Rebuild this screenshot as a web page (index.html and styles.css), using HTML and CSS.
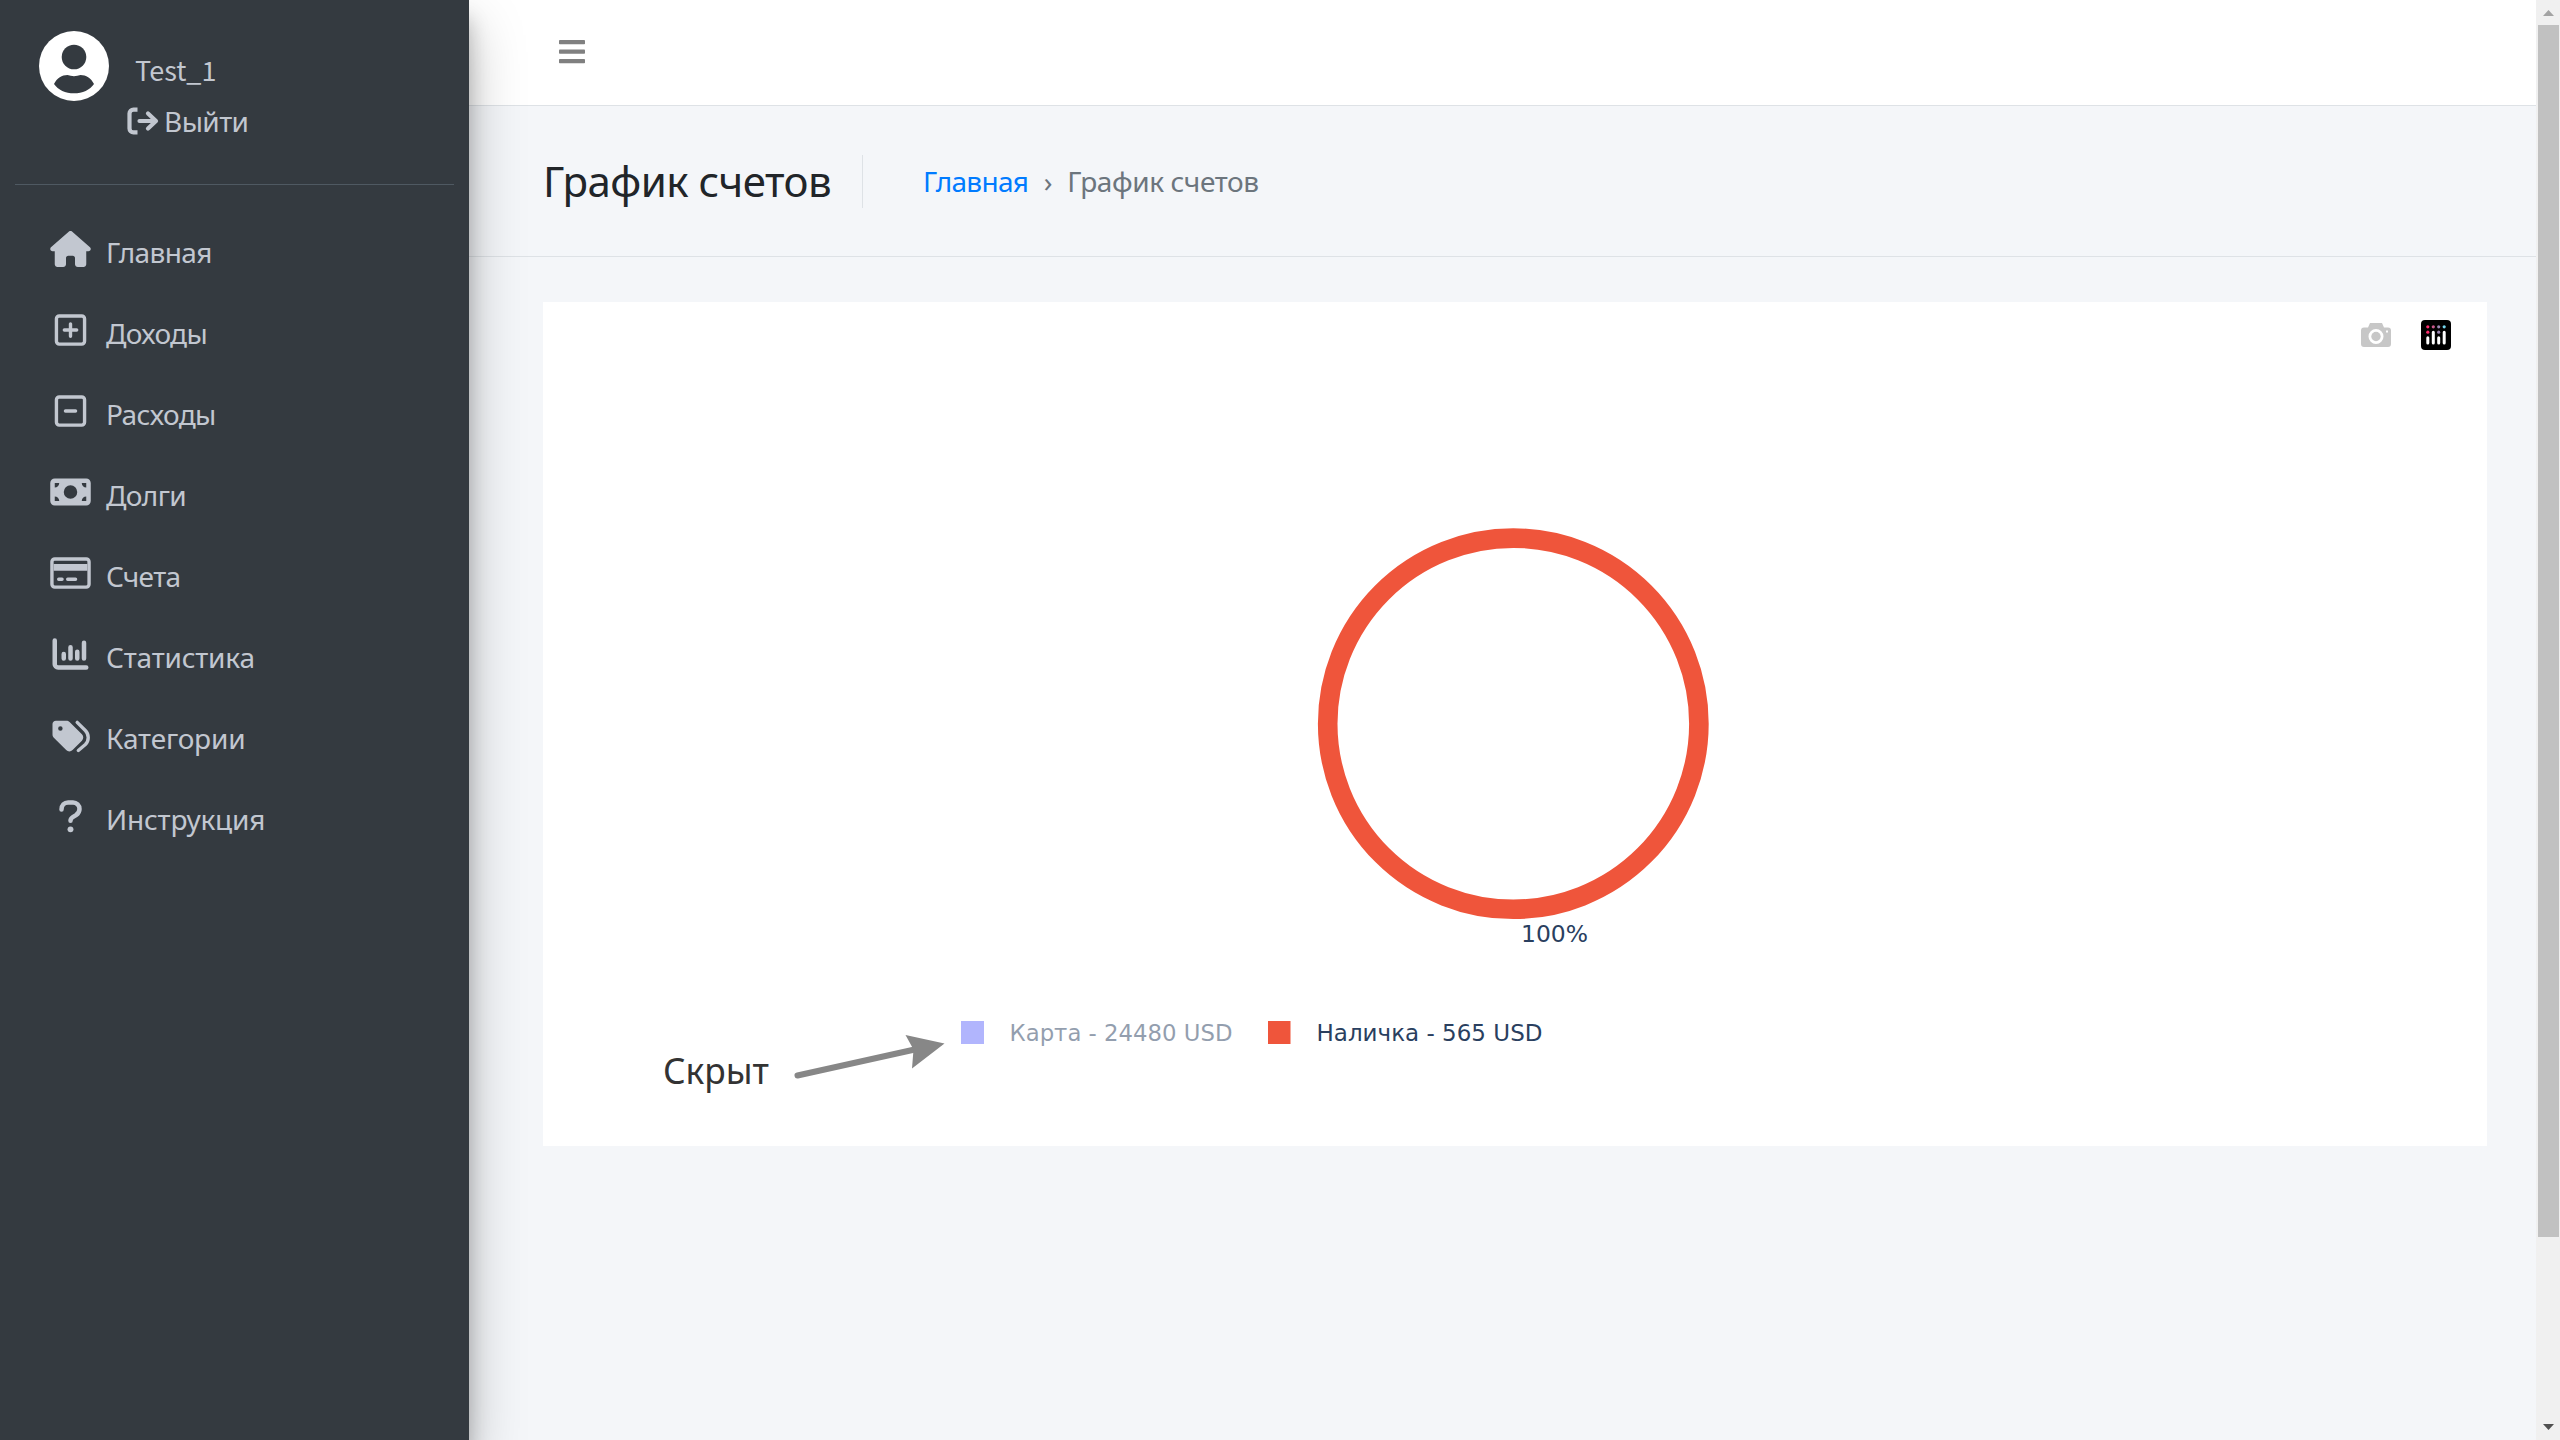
FILE: index.html
```html
<!DOCTYPE html>
<html lang="ru">
<head>
<meta charset="utf-8">
<title>График счетов</title>
<link rel="stylesheet" href="styles.css">
</head>
<body>
<div class="app">
  <aside class="sidebar">
    <div class="user">
      <svg class="avatar" viewBox="0 0 70 70"><circle cx="35" cy="35" r="35" fill="#fff"/><circle cx="35" cy="26" r="12.3" fill="#343a40"/><path d="M15 53C18 47 23 44 28.500 44C32.500 45.500 37.500 45.500 41.500 44C47 44 52 47 55 53C51 59 43.500 62.300 35 62.300S19 59 15 53z" fill="#343a40"/></svg>
      <div class="user-text">
        <span class="user-name">Test_1</span>
        <a class="logout"><svg class="logout-icon" viewBox="0 0 32 28" fill="none" stroke="currentColor" stroke-width="4.200" stroke-linecap="round" stroke-linejoin="round"><path d="M10.500 2.600H6.500a4 4 0 0 0-4 4v14.800a4 4 0 0 0 4 4h4" stroke-linecap="butt"/><path d="M12.500 14h16M21 6.500l8 7.500-8 7.500"/></svg><span>Выйти</span></a>
      </div>
    </div>
    <nav class="nav">
      <a class="nav-item"><svg class="nav-icon" viewBox="0 0 576 512"><path fill="currentColor" d="M575.800 255.500c0 18-15 32.100-32 32.100h-32l.7 160.200c0 2.700-.2 5.400-.5 8.100V472c0 22.100-17.900 40-40 40H456c-1.100 0-2.200 0-3.300-.1c-1.400.1-2.800.1-4.200.1H416 392c-22.100 0-40-17.900-40-40V448 384c0-17.700-14.300-32-32-32H256c-17.700 0-32 14.300-32 32v64 24c0 22.100-17.900 40-40 40H160 128.100c-1.500 0-3-.1-4.500-.2c-1.200.1-2.400.2-3.600.2H104c-22.100 0-40-17.900-40-40V360c0-.9 0-1.900.1-2.800V287.600H32c-18 0-32-14-32-32.100c0-9 3-17 10-24L266.400 8c7-7 15-8 22-8s15 2 21 7L564.800 231.500c8 7 12 15 11 24z"/></svg><span>Главная</span></a>
      <a class="nav-item"><svg class="nav-icon" viewBox="0 0 576 512" fill="none" stroke="currentColor" stroke-width="48" stroke-linecap="round"><rect x="88" y="56" width="400" height="400" rx="40"/><path d="M288 168v176M200 256h176"/></svg><span>Доходы</span></a>
      <a class="nav-item"><svg class="nav-icon" viewBox="0 0 576 512" fill="none" stroke="currentColor" stroke-width="48" stroke-linecap="round"><rect x="88" y="56" width="400" height="400" rx="40"/><path d="M216 256h144"/></svg><span>Расходы</span></a>
      <a class="nav-item"><svg class="nav-icon" viewBox="0 0 576 512"><path fill="currentColor" fill-rule="evenodd" d="M64 64C28.700 64 0 92.700 0 128V384c0 35.300 28.700 64 64 64H512c35.300 0 64-28.700 64-64V128c0-35.300-28.700-64-64-64zM64 384V320c35.300 0 64 28.700 64 64zM64 192V128h64c0 35.300-28.700 64-64 64zM448 384c0-35.300 28.700-64 64-64v64zM512 192c-35.300 0-64-28.700-64-64h64zM288 160a96 96 0 1 1 0 192 96 96 0 1 1 0-192z"/></svg><span>Долги</span></a>
      <a class="nav-item"><svg class="nav-icon" viewBox="0 0 576 512" fill="none" stroke="currentColor" stroke-width="48" stroke-linecap="round"><rect x="24" y="56" width="528" height="400" rx="40"/><path d="M48 176h480" stroke-width="96" stroke-linecap="butt"/><path d="M120 344h48M248 344h112"/></svg><span>Счета</span></a>
      <a class="nav-item long"><svg class="nav-icon" viewBox="0 0 576 512" fill="none" stroke="currentColor" stroke-width="64" stroke-linecap="round" stroke-linejoin="round"><path d="M64 64v336a48 48 0 0 0 48 48h400M192 256v64M288 160v160M384 224v96M480 96v224"/></svg><span>Статистика</span></a>
      <a class="nav-item long"><svg class="nav-icon" viewBox="0 0 576 512"><g transform="translate(0 20)"><path fill="currentColor" fill-rule="evenodd" d="M32 80v149.500c0 17 6.700 33.300 18.700 45.300l176 176c25 25 65.500 25 90.500 0L450.700 317.300c25-25 25-65.500 0-90.500l-176-176C262.700 38.700 246.500 32 229.500 32H80C53.500 32 32 53.500 32 80zM144 112a32 32 0 1 1 0 64 32 32 0 1 1 0-64z"/><path d="M383 56L499 172a142 142 0 0 1 0 200L399 456" fill="none" stroke="currentColor" stroke-width="48" stroke-linecap="round"/></g></svg><span>Категории</span></a>
      <a class="nav-item long"><svg class="nav-icon" viewBox="0 0 576 512"><path d="M160 165C160 101 200 64 254 64h70a92 92 0 0 1 92 92c0 42-18 66-50 88l-46 28c-22 14-32 26-32 52" fill="none" stroke="currentColor" stroke-width="64" stroke-linecap="round"/><circle cx="288" cy="446" r="42" fill="currentColor"/></svg><span>Инструкция</span></a>
    </nav>
  </aside>
  <main class="main">
    <header class="topbar"><svg class="burger" viewBox="0 0 26 24" fill="#808080"><rect width="26" height="4.300" rx=".8"/><rect y="9.500" width="26" height="4.300" rx=".8"/><rect y="19" width="26" height="4.300" rx=".8"/></svg></header>
    <section class="heading">
      <h1 class="title">График счетов</h1>
      <div class="crumbs"><a class="crumb-link">Главная</a><span class="crumb-sep">›</span><span class="crumb-here">График счетов</span></div>
    </section>
    <section class="card">
      <svg class="chart" viewBox="0 0 1944 844">
        <g transform="translate(1818 21)"><path fill="#c7c7c7" fill-rule="evenodd" d="M3 4.500H7L9 0h12l2 4.500h4a3 3 0 0 1 3 3V21a3 3 0 0 1-3 3H3a3 3 0 0 1-3-3V7.500a3 3 0 0 1 3-3zM15 6a7.500 7.500 0 1 0 0 15 7.500 7.500 0 0 0 0-15zM25 7.500v2h2v-2z"/><circle cx="15" cy="13.500" r="4.700" fill="#c7c7c7"/></g>
        <g transform="translate(1878 18)"><rect width="30" height="30" rx="4"/><g stroke="#fff" stroke-width="3" stroke-linecap="round"><path d="M6.800 17.700v5.300M12.300 12.200v10.800M17.700 17.700v5.300M23.200 12.200v10.800"/></g><g fill="#ff2c6d"><circle cx="6.800" cy="6.800" r="1.600"/><circle cx="6.800" cy="12.200" r="1.600"/></g><circle cx="12.300" cy="6.800" r="1.600" fill="#c8588c"/><circle cx="17.700" cy="6.800" r="1.600" fill="#9b86b2"/><circle cx="17.700" cy="12.200" r="1.600" fill="#9b86b2"/><circle cx="23.200" cy="6.800" r="1.600" fill="#74d6ee"/></g>
        <circle cx="970.300" cy="421.700" r="185.600" fill="none" stroke="#ef553b" stroke-width="19.600"/>
        <text class="label" x="978" y="640" textLength="67" lengthAdjust="spacingAndGlyphs">100%</text>
        <rect x="418" y="719" width="23" height="23" fill="#b1b5fd"/>
        <text class="label muted" x="466.500" y="739" textLength="223" lengthAdjust="spacingAndGlyphs">Карта - 24480 USD</text>
        <rect x="725" y="719" width="22.500" height="23" fill="#ef553b"/>
        <text class="label" x="773.500" y="739" textLength="226" lengthAdjust="spacingAndGlyphs">Наличка - 565 USD</text>
        <text class="note" x="120" y="782" textLength="106" lengthAdjust="spacingAndGlyphs">Скрыт</text>
        <path d="M254.500 773.500L374 747" stroke="#878787" stroke-width="6" stroke-linecap="round"/><path d="M401.500 741.500L362.500 733l8 14.500-1.500 19z" fill="#878787"/>
      </svg>
    </section>
  </main>
  <div class="scrollbar">
    <svg class="arrow" viewBox="0 0 11 6"><path d="M5.500 0L11 6H0z" fill="#a3a3a3"/></svg>
    <div class="thumb"></div>
    <svg class="arrow arrow-down" viewBox="0 0 11 6"><path d="M5.500 6L11 0H0z" fill="#505050"/></svg>
  </div>
</div>
</body>
</html>
```
FILE: styles.css
```css
* { box-sizing: border-box; }
body { margin: 0; font-family: "Noto Sans", sans-serif; font-size: 28px; color: #212529; }
svg { display: block; flex: none; overflow: visible; }
.app { display: flex; width: 2560px; height: 1440px; overflow: hidden; background: #f4f6f9; }

.sidebar { position: relative; z-index: 1; flex: none; width: 469px; padding: 0 15px; background: #343a40; color: #c2c7d0; box-shadow: 0 26px 52px rgba(0,0,0,.25), 0 19px 19px rgba(0,0,0,.22); }
.user { display: flex; height: 185px; padding: 31px 0 0 24px; border-bottom: 1px solid #4f5962; }
.avatar { width: 70px; height: 70px; }
.user-text { display: flex; flex-direction: column; padding: 13px 0 0 18px; }
.user-name { padding-left: 8px; line-height: 51px; font-family: "Noto Sans CJK SC", sans-serif; font-size: 27px; }
.logout { display: flex; align-items: center; gap: 5px; line-height: 51px; letter-spacing: -.02em; }
.logout span { padding-top: 1px; }
.logout-icon { width: 32px; height: 28px; }
.nav { display: flex; flex-direction: column; padding-top: 26px; }
.nav-item { display: flex; align-items: center; gap: 15px; height: 81px; padding-left: 35px; letter-spacing: -.022em; }
.nav-item.long { letter-spacing: -.007em; }
.nav-icon { width: 41px; height: 36px; margin-top: -5px; }

.main { flex: 1; display: flex; flex-direction: column; }
.topbar { height: 106px; padding: 40px 0 0 90px; background: #fff; border-bottom: 1px solid #dee2e6; }
.burger { width: 26px; height: 24px; }
.heading { display: flex; align-items: center; height: 151px; padding-left: 74px; border-bottom: 1px solid #dee2e6; }
.title { width: 320px; height: 53px; margin: 0; border-right: 1px solid #dee2e6; font-size: 42px; font-weight: 400; line-height: 51px; letter-spacing: -.013em; white-space: nowrap; }
.crumbs { display: flex; padding-left: 60px; letter-spacing: -.025em; white-space: nowrap; }
.crumb-link { color: #007bff; }
.crumb-sep, .crumb-here { color: #6c757d; }
.crumb-sep { width: 39px; text-align: center; }
.crumb-here { letter-spacing: -.015em; }
.card { width: 1944px; height: 844px; margin: 45px 0 0 74px; background: #fff; }
.chart { width: 1944px; height: 844px; }
.label { font-family: "DejaVu Sans", sans-serif; font-size: 22.500px; fill: #2a3f5f; }
.muted { opacity: .5; }
.note { font-size: 36px; fill: #333; }

.scrollbar { flex: none; display: flex; flex-direction: column; align-items: flex-end; width: 24px; padding: 10px 1px 10px 2px; background: #f0f0f0; }
.arrow { width: 11px; height: 6px; margin-right: 5px; }
.thumb { width: 21px; height: 1212px; margin-top: 9px; background: #c1c1c1; }
.arrow-down { margin-top: auto; }
```
